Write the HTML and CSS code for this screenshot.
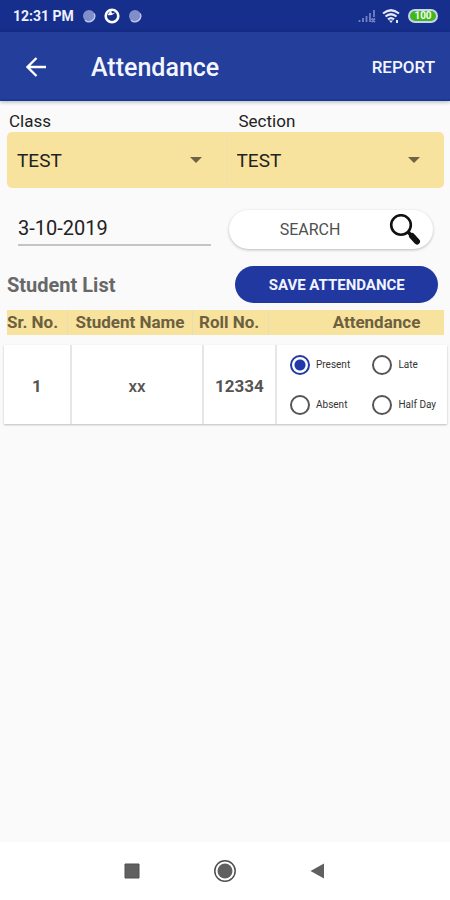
FILE: index.html
```
<!DOCTYPE html>
<html lang="en">
<head>
<meta charset="utf-8">
<meta name="viewport" content="width=device-width, initial-scale=1">
<title>Attendance</title>
<link rel="stylesheet" href="styles.css">
</head>
<body>
<div class="status">
  <span class="time">12:31 PM</span>
  <svg class="dot" viewBox="0 0 14 14"><circle cx="7" cy="7" r="6" fill="#7f8fcb"/><path d="M3 11.200A5.800 5.800 0 0 0 12.200 4.500" fill="none" stroke="#c3cbed" stroke-width="1.300"/></svg>
  <svg class="ring" viewBox="0 0 16 16"><circle cx="8" cy="8" r="6.300" fill="none" stroke="#fff" stroke-width="2.600"/><path d="M3.500 7Q8 8 11.500 4.500L8 5.500 7 2Z" fill="#fff"/></svg>
  <svg class="dot" viewBox="0 0 14 14"><circle cx="7" cy="7" r="6" fill="#7f8fcb"/><path d="M3 11.200A5.800 5.800 0 0 0 12.200 4.500" fill="none" stroke="#c3cbed" stroke-width="1.300"/></svg>
  <span class="spacer"></span>
  <svg class="signal" viewBox="0 0 18 14"><path d="M1.500 13v-2M5 13V9M8.500 13V7M12 13V4M16 8V1M13.500 9.500l3.500 3.500m0-3.500l-3.500 3.500" fill="none" stroke="#7182c4" stroke-width="1.800"/></svg>
  <svg class="wifi" viewBox="0 0 18 14"><path d="M1 4.500Q9-2 17 4.500M3.500 7.500Q9 3 14.500 7.500M6 10.300Q9 7.800 12 10.300" fill="none" stroke="#e4e8fa" stroke-width="2.200"/><path d="M7 11.500h4L9 14ZM14 11h2v3h-2z" fill="#e4e8fa"/></svg>
  <span class="battery">100</span>
</div>
<header class="appbar">
  <button class="back" type="button" aria-label="Back"><svg viewBox="0 0 20 20"><path d="M20 10H2M10.500 1L1.500 10l9 9" fill="none" stroke="#fff" stroke-width="2.300"/></svg></button>
  <h1>Attendance</h1>
  <button class="report" type="button">REPORT</button>
</header>
<main>
  <div class="labels"><label for="class">Class</label><label for="section">Section</label></div>
  <div class="spinners">
    <div class="spinner"><select id="class"><option>TEST</option></select><svg viewBox="0 0 12 6"><path d="M0 0h12L6 6z" fill="#6f6345"/></svg></div>
    <div class="spinner"><select id="section"><option>TEST</option></select><svg viewBox="0 0 12 6"><path d="M0 0h12L6 6z" fill="#6f6345"/></svg></div>
  </div>
  <div class="searchrow">
    <input class="date" type="text" value="3-10-2019" aria-label="Date">
    <button class="search" type="button"><span>SEARCH</span><svg viewBox="0 0 32 32"><circle cx="12" cy="11" r="9.800" fill="none" stroke="#111" stroke-width="2.600"/><path d="M18.500 17.500l4 4" stroke="#111" stroke-width="3.500"/><path d="M23 22l5 5.500" stroke="#111" stroke-width="6" stroke-linecap="round"/></svg></button>
  </div>
  <div class="listrow"><h2>Student List</h2><button class="save" type="button">SAVE ATTENDANCE</button></div>
  <table>
    <thead><tr><th>Sr. No.</th><th>Student Name</th><th>Roll No.</th><th>Attendance</th></tr></thead>
    <tbody><tr><td>1</td><td>xx</td><td>12334</td><td>
      <div class="options">
        <label><input type="radio" name="att" checked>Present</label>
        <label><input type="radio" name="att">Late</label>
        <label><input type="radio" name="att">Absent</label>
        <label><input type="radio" name="att">Half Day</label>
      </div></td></tr></tbody>
  </table>
</main>
<nav class="nav">
  <button type="button" aria-label="Recents"><svg viewBox="0 0 24 24"><path d="M5 5h14v14H5z" fill="#606060" stroke="#505050"/></svg></button>
  <button type="button" aria-label="Home"><svg viewBox="0 0 24 24"><circle cx="12" cy="12" r="10.200" fill="none" stroke="#505050" stroke-width="1.500"/><circle cx="12" cy="12" r="7.500" fill="#606060"/></svg></button>
  <button type="button" aria-label="Back"><svg viewBox="0 0 24 24"><path d="M18 4.500v15L4.500 12z" fill="#606060"/></svg></button>
</nav>
</body>
</html>
```
FILE: styles.css
```
* { box-sizing: border-box; }
body {
  margin: 0;
  min-height: 100vh;
  display: flex;
  flex-direction: column;
  background: #fafafa;
  color: #222;
  font-family: Roboto, sans-serif;
}
button, input, select { font: inherit; color: inherit; }
button { border: 0; padding: 0; background: none; }
svg { display: block; flex: none; }
h1, h2 { margin: 0; font-weight: 500; }

.status {
  display: flex;
  align-items: center;
  gap: 8px;
  height: 32px;
  padding: 0 12px 0 13px;
  background: #162e8c;
  color: #eef1ff;
}
.time { font-size: 14px; font-weight: 700; }
.dot { width: 14px; height: 14px; }
.ring { width: 16px; height: 16px; }
.spacer { flex: 1; }
.signal, .wifi { width: 18px; height: 14px; }
.signal { margin-right: -2px; }
.battery {
  width: 30px;
  height: 14px;
  border: 2px solid #c9d3ee;
  border-radius: 7px;
  background: #43b51f;
  color: #efffe8;
  font-size: 10px;
  font-weight: 700;
  line-height: 10px;
  text-align: center;
}

.appbar {
  display: flex;
  align-items: center;
  height: 69px;
  padding: 3px 15px 0 26px;
  background: #243e9c;
  border-bottom: 2px solid #1b3899;
  box-shadow: 0 1px 4px rgba(0, 0, 0, 0.3);
  color: #f4f6ff;
}
.back { margin-right: 45px; }
.back svg { width: 20px; height: 20px; }
.appbar h1 { flex: 1; font-size: 25px; }
.report { font-size: 17px; font-weight: 500; }

main { flex: 1; padding: 10px 6px 0 7px; }
.labels {
  display: grid;
  grid-template-columns: 229fr 205fr;
  padding-left: 2px;
  font-size: 17px;
  line-height: 21px;
}
.spinners {
  display: grid;
  grid-template-columns: 1fr 1fr;
  height: 56px;
  border-radius: 5px;
  background: #f7e39d;
}
.spinner { display: flex; align-items: center; padding-right: 24px; }
.spinner + .spinner { border-left: 1px solid #ece0b4; }
.spinner select {
  flex: 1;
  min-width: 0;
  height: 56px;
  padding: 0 10px;
  border: 0;
  background: none;
  appearance: none;
  font-size: 19px;
}
.spinner svg { width: 12px; height: 6px; margin-left: -12px; pointer-events: none; }

.searchrow {
  display: grid;
  grid-template-columns: 193fr 204fr;
  gap: 18px;
  align-items: center;
  margin-top: 22px;
  padding: 0 11px;
}
.date {
  min-width: 0;
  height: 34px;
  margin-bottom: 2px;
  padding: 0;
  border: 0;
  border-bottom: 2px solid #c4c4c4;
  background: none;
  font-size: 20px;
}
.search {
  display: flex;
  align-items: center;
  height: 39px;
  padding: 0 12px 0 0;
  border-radius: 20px;
  background: #fff;
  box-shadow: 0 1px 3px rgba(0, 0, 0, 0.25);
  color: #505050;
  font-size: 16px;
}
.search span { flex: 1; padding-left: 2px; }
.search svg { width: 32px; height: 32px; }

.listrow {
  display: flex;
  justify-content: space-between;
  align-items: center;
  margin-top: 17px;
  padding-right: 6px;
}
.listrow h2 { color: #686868; font-size: 20px; font-weight: 700; }
.save {
  width: 47%;
  height: 37px;
  border-radius: 19px;
  background: #2038a0;
  color: #f2f4ff;
  font-size: 15px;
  font-weight: 700;
}

table, thead, tbody { display: block; }
tr { display: grid; }
th, td { padding: 0; }
thead { margin-top: 7px; background: #f7e39d; color: #6d6040; }
thead tr { grid-template-columns: 60fr 125fr 76fr 176fr; }
th { font-size: 17px; font-weight: 700; line-height: 25px; white-space: nowrap; }
th + th { border-left: 1px solid #e8ddb5; }
th:first-child { text-align: left; }
th:nth-child(3) { text-align: left; padding-left: 6px; }
th:last-child { padding-left: 40px; }
tbody { margin: 10px -3px 0; }
tbody tr {
  grid-template-columns: 66fr 132fr 73fr 172fr;
  height: 79px;
  background: #fff;
  box-shadow: 0 1px 2px rgba(0, 0, 0, 0.25);
}
td {
  display: grid;
  place-items: center;
  padding-top: 2px;
  color: #555;
  font-size: 17px;
  font-weight: 700;
}
td:nth-child(2) { font-weight: 500; }
td + td { border-left: 2px solid #e6e6e6; }
td:last-child { padding-top: 0; }
.options {
  display: grid;
  grid-template-columns: 83fr 75fr;
  gap: 20px 0;
  width: 100%;
  padding: 0 0 0 13px;
}
.options label {
  display: flex;
  align-items: center;
  gap: 6px;
  color: #333;
  font-size: 10px;
  font-weight: 400;
  line-height: 20px;
  white-space: nowrap;
}
.options input {
  flex: none;
  width: 20px;
  height: 20px;
  margin: 0;
  border: 2px solid #555;
  border-radius: 50%;
  background: #fff;
  appearance: none;
}
.options input:checked {
  border-color: #2038a8;
  background: radial-gradient(circle, #2038a8 5px, #fff 6px);
}

.nav {
  display: flex;
  justify-content: center;
  align-items: center;
  gap: 69px;
  height: 58px;
  background: #fff;
}
.nav svg { width: 24px; height: 24px; }
```
